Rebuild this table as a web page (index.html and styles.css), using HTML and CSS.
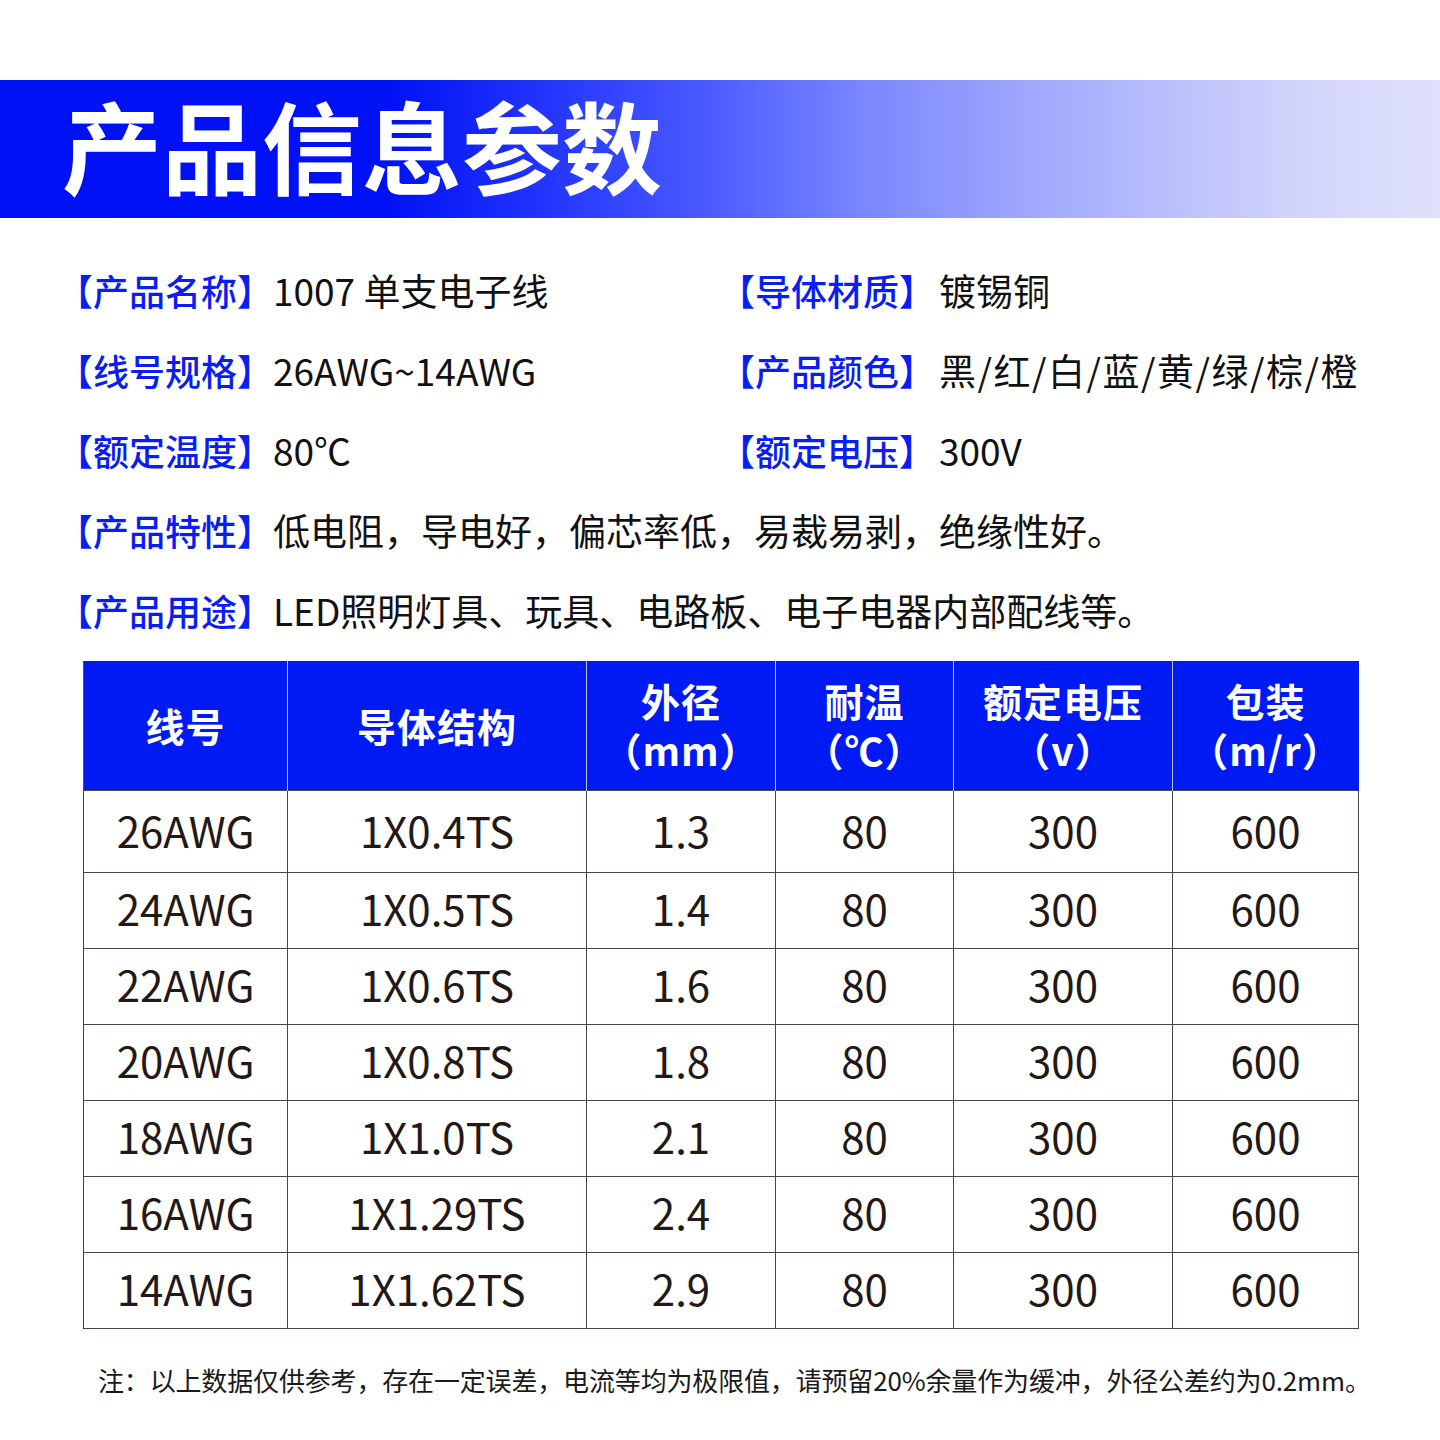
FILE: index.html
```html
<!DOCTYPE html>
<html lang="zh-CN">
<head>
<meta charset="utf-8">
<title>产品信息参数</title>
<link rel="stylesheet" href="styles.css">
</head>
<body>
<div class="page">
  <header class="banner">
    <h1 class="banner-title">产品信息参数</h1>
  </header>

  <section class="info">
    <div class="info-item"><span class="label">【产品名称】</span><span class="value">1007 单支电子线</span></div>
    <div class="info-item right"><span class="label">【导体材质】</span><span class="value">镀锡铜</span></div>
    <div class="info-item"><span class="label">【线号规格】</span><span class="value">26AWG~14AWG</span></div>
    <div class="info-item right"><span class="label">【产品颜色】</span><span class="value spaced">黑/红/白/蓝/黄/绿/棕/橙</span></div>
    <div class="info-item"><span class="label">【额定温度】</span><span class="value">80℃</span></div>
    <div class="info-item right"><span class="label">【额定电压】</span><span class="value">300V</span></div>
    <div class="info-item wide"><span class="label">【产品特性】</span><span class="value">低电阻，导电好，偏芯率低，易裁易剥，绝缘性好。</span></div>
    <div class="info-item wide"><span class="label">【产品用途】</span><span class="value">LED照明灯具、玩具、电路板、电子电器内部配线等。</span></div>
  </section>

  <table class="spec">
    <colgroup>
      <col class="c1"><col class="c2"><col class="c3"><col class="c4"><col class="c5"><col class="c6">
    </colgroup>
    <thead>
      <tr>
        <th><span class="th-line">线号</span></th>
        <th><span class="th-line">导体结构</span></th>
        <th><span class="th-line">外径</span><span class="th-line">（mm）</span></th>
        <th><span class="th-line">耐温</span><span class="th-line">（℃）</span></th>
        <th><span class="th-line">额定电压</span><span class="th-line">（v）</span></th>
        <th><span class="th-line">包装</span><span class="th-line">（m/r）</span></th>
      </tr>
    </thead>
    <tbody>
      <tr><td>26AWG</td><td>1X0.4TS</td><td>1.3</td><td>80</td><td>300</td><td>600</td></tr>
      <tr><td>24AWG</td><td>1X0.5TS</td><td>1.4</td><td>80</td><td>300</td><td>600</td></tr>
      <tr><td>22AWG</td><td>1X0.6TS</td><td>1.6</td><td>80</td><td>300</td><td>600</td></tr>
      <tr><td>20AWG</td><td>1X0.8TS</td><td>1.8</td><td>80</td><td>300</td><td>600</td></tr>
      <tr><td>18AWG</td><td>1X1.0TS</td><td>2.1</td><td>80</td><td>300</td><td>600</td></tr>
      <tr><td>16AWG</td><td>1X1.29TS</td><td>2.4</td><td>80</td><td>300</td><td>600</td></tr>
      <tr><td>14AWG</td><td>1X1.62TS</td><td>2.9</td><td>80</td><td>300</td><td>600</td></tr>
    </tbody>
  </table>

  <p class="note">注：以上数据仅供参考，存在一定误差，电流等均为极限值，请预留20%余量作为缓冲，外径公差约为0.2mm。</p>
</div>
</body>
</html>
```

FILE: styles.css
```css
* { box-sizing: border-box; }

html, body {
  margin: 0;
  padding: 0;
  background: #ffffff;
}

body {
  font-family: "Noto Sans CJK SC", "Noto Sans", sans-serif;
  color: #231815;
}

.page {
  width: 1440px;
  padding-top: 80px;
}

.banner {
  height: 138px;
  background: linear-gradient(90deg, #0010f5 0%, #0012f5 27%, #2a3cff 40%, #4a5aff 49%, #7a87ff 60%, #9ea6fd 71%, #bcc1fc 82%, #d3d6fb 91%, #dfe1fb 100%);
  display: flex;
  align-items: center;
  padding-left: 62px;
}

.banner-title {
  margin: 0;
  color: #ffffff;
  font-size: 100px;
  font-weight: 700;
  line-height: 1;
  letter-spacing: 0;
  transform: translateY(-5px);
}

.info {
  display: grid;
  grid-template-columns: 662px 1fr;
  grid-auto-rows: 80px;
  margin-top: 32px;
  padding-left: 57px;
}

.info-item {
  display: flex;
  align-items: center;
  font-size: 36px;
  line-height: 1;
  white-space: nowrap;
}

.info-item.wide {
  grid-column: 1 / -1;
}

.label {
  color: #0a1ef2;
  font-weight: 500;
}

.value {
  color: #111111;
  font-weight: 400;
  font-size: 37px;
}

.info-item.right .value {
  margin-left: 4px;
}

.value.spaced {
  letter-spacing: 1.5px;
}

.spec {
  margin: 11px 0 0 83px;
  width: 1275px;
  border-collapse: collapse;
  table-layout: fixed;
}

.c1 { width: 204px; }
.c2 { width: 299px; }
.c3 { width: 189px; }
.c4 { width: 178px; }
.c5 { width: 219px; }
.c6 { width: 186px; }

.spec th {
  height: 129px;
  background: #001af4;
  color: #ffffff;
  font-size: 39px;
  font-weight: 700;
  letter-spacing: 1px;
  text-align: center;
  vertical-align: middle;
  border-left: 1px solid #b9c0ff;
  border-right: 1px solid #b9c0ff;
  padding: 0;
}

.th-line {
  display: block;
  height: 49px;
  line-height: 49px;
}

.spec th:first-child { border-left: 1px solid #3344f0; }
.spec th:last-child { border-right: 1px solid #001af4; }

.spec td {
  height: 76px;
  font-size: 42px;
  font-weight: 400;
  color: #231815;
  text-align: center;
  vertical-align: middle;
  border: 1.5px solid #4a4544;
  padding: 0 0 5px 0;
  line-height: 1;
}

.spec tbody tr:first-child td {
  height: 82px;
  padding-bottom: 2px;
}

.note {
  margin: 35px 0 0 98px;
  font-size: 26px;
  line-height: 1.2;
  letter-spacing: -0.16px;
  color: #1a1a1a;
  white-space: nowrap;
}
```
